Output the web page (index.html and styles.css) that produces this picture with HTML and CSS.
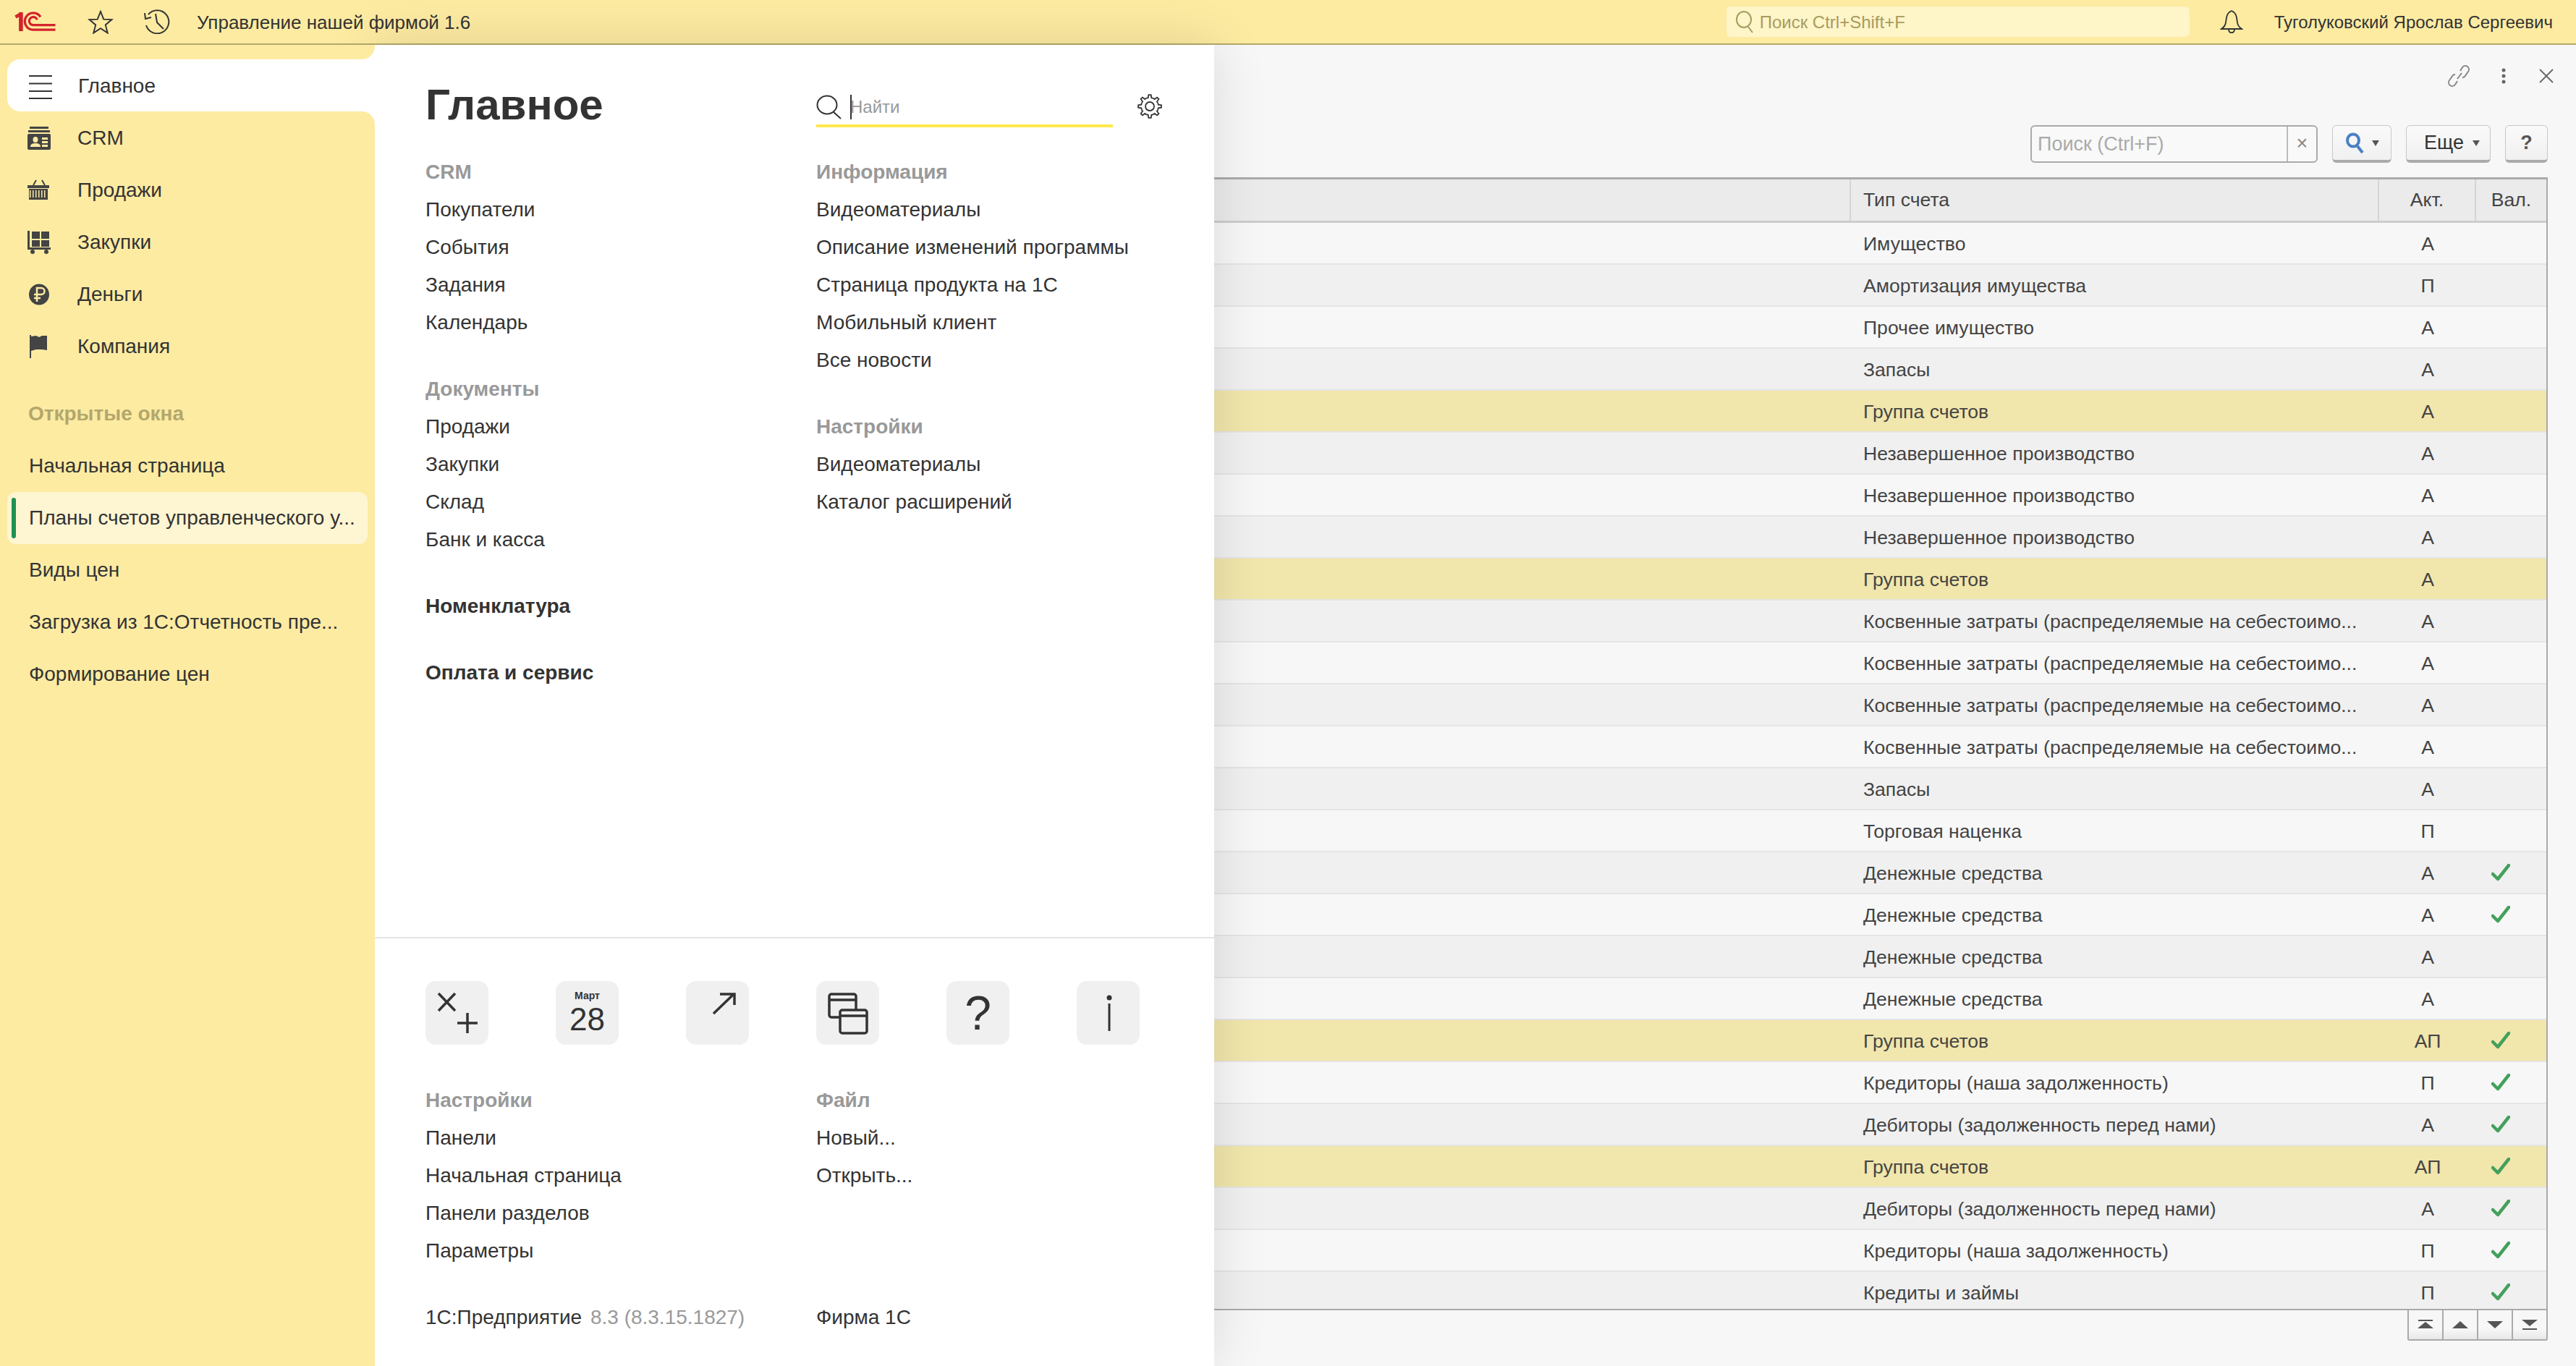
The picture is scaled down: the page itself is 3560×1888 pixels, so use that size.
FILE: index.html
```html
<!DOCTYPE html>
<html lang="ru">
<head>
  <meta charset="UTF-8">
  <title>Управление нашей фирмой 1.6</title>
  <link rel="stylesheet" href="styles.css">
</head>
<body>

  <header class="topbar">
    <svg class="logo" viewBox="0 0 60 30" fill="none" stroke="#d3232b">
      <path d="M1 8 L8 4" stroke-width="5"/>
      <path d="M9 1 V29" stroke-width="6"/>
      <path d="M38 8 A12.5 12.5 0 1 0 27 27 H60" stroke-width="3.5"/>
      <path d="M33 12 A6 6 0 1 0 27 20 H60" stroke-width="3.5"/>
    </svg>
    <svg class="top-star" viewBox="0 0 36 34" fill="none" stroke="#333" stroke-width="2">
      <path d="M18 2 L22.4 13 L34 13.5 L25 21 L28 32.5 L18 26 L8 32.5 L11 21 L2 13.5 L13.6 13 Z"/>
    </svg>
    <svg class="top-history" viewBox="0 0 36 34" fill="none" stroke="#333" stroke-width="2">
      <path d="M6 7 A16 16 0 1 1 3 22"/>
      <path d="M1 5 L2 13 L10 11"/>
      <path d="M16 6 L18 18 L27 27"/>
    </svg>
    <span class="top-title">Управление нашей фирмой 1.6</span>
    <div class="top-search">
      <svg class="top-search-icon" viewBox="0 0 26 32" fill="none" stroke="#a89c5e" stroke-width="2">
        <ellipse cx="12" cy="13" rx="10" ry="11"/>
        <path d="M18 23 L24 31"/>
      </svg>
      <span class="top-search-text">Поиск Ctrl+Shift+F</span>
    </div>
    <svg class="top-bell" viewBox="0 0 32 32" fill="none" stroke="#333" stroke-width="1.8">
      <path d="M16 1 C9 4 9 10 8 17 C7.5 21 5 24 2 26 H30 C27 24 24.500 21 24 17 C23 10 23 4 16 1 Z"/>
      <path d="M12 26 C12 33 20 33 20 26"/>
    </svg>
    <span class="top-user">Туголуковский Ярослав Сергеевич</span>
  </header>

  <div class="main">
    <nav class="sidebar">
      <div class="side-cap"></div>
      <div class="side-active-wrap">
        <div class="side-item side-active">
          <svg class="side-icon" viewBox="0 0 32 32" stroke="#333" stroke-width="2">
            <path d="M0 2 H32 M0 12.500 H32 M0 23 H32 M0 33 H32"/>
          </svg>
          <span>Главное</span>
        </div>
      </div>
      <div class="side-rest">
        <div class="side-item">
          <svg class="side-icon" viewBox="0 0 32 32" fill="#444">
            <rect x="3" y="0" width="26" height="3"/>
            <rect x="1" y="5" width="30" height="3"/>
            <path fill-rule="evenodd" d="M2 10 H30 A2 2 0 0 1 32 12 V30 A2 2 0 0 1 30 32 H2 A2 2 0 0 1 0 30 V12 A2 2 0 0 1 2 10 Z M11 14 A3.500 4 0 0 0 11 22 A3.500 4 0 0 0 11 14 Z M4 28 H18 C18 24 15 23 11 23 C7 23 4 24 4 28 Z M20 15 V18 H28 V15 Z M20 20 V23 H28 V20 Z M20 25 V28 H28 V25 Z"/>
          </svg>
          <span>CRM</span>
        </div>
        <div class="side-item">
          <svg class="side-icon" viewBox="0 0 32 32" fill="#444">
            <path d="M8 9 L12 2 M24 9 L20 2" stroke="#444" stroke-width="2" fill="none"/>
            <rect x="0" y="9" width="30" height="4"/>
            <rect x="2" y="14" width="26" height="15"/>
            <path d="M3 21 H27" stroke="#fdeba2" stroke-width="10" stroke-dasharray="1.500 2.500"/>
          </svg>
          <span>Продажи</span>
        </div>
        <div class="side-item">
          <svg class="side-icon" viewBox="0 0 32 32" fill="#444">
            <rect x="0" y="0" width="3" height="26"/>
            <rect x="6" y="1" width="11" height="10"/>
            <rect x="19" y="1" width="11" height="10"/>
            <rect x="6" y="13" width="11" height="9"/>
            <rect x="19" y="13" width="11" height="9"/>
            <rect x="0" y="23" width="32" height="3"/>
            <circle cx="7" cy="29" r="3"/>
            <circle cx="26" cy="29" r="3"/>
          </svg>
          <span>Закупки</span>
        </div>
        <div class="side-item">
          <svg class="side-icon" viewBox="0 0 32 32">
            <ellipse cx="16" cy="16" rx="14" ry="14.500" fill="#444"/>
            <path d="M13 26 V7 H19 A4.500 4.500 0 0 1 19 16 H9 M9 21 H18" fill="none" stroke="#fdeba2" stroke-width="2.500"/>
          </svg>
          <span>Деньги</span>
        </div>
        <div class="side-item">
          <svg class="side-icon" viewBox="0 0 32 32" fill="#444">
            <rect x="3" y="0" width="2" height="32"/>
            <path d="M5 2 L12 1 L16 3 L20 1 L27 1 V21 L20 20 L12 20 L5 22 Z"/>
          </svg>
          <span>Компания</span>
        </div>

        <div class="side-heading">Открытые окна</div>
        <div class="win-item">Начальная страница</div>
        <div class="win-item win-active"><i class="win-bar"></i>Планы счетов управленческого у...</div>
        <div class="win-item">Виды цен</div>
        <div class="win-item">Загрузка из 1С:Отчетность пре...</div>
        <div class="win-item">Формирование цен</div>
      </div>
    </nav>

    <section class="menu-panel">
      <div class="menu-top">
        <div class="menu-col">
          <h1 class="menu-title">Главное</h1>
          <div class="menu-group">
            <div class="menu-head">CRM</div>
            <div class="menu-link">Покупатели</div>
            <div class="menu-link">События</div>
            <div class="menu-link">Задания</div>
            <div class="menu-link">Календарь</div>
          </div>
          <div class="menu-group">
            <div class="menu-head">Документы</div>
            <div class="menu-link">Продажи</div>
            <div class="menu-link">Закупки</div>
            <div class="menu-link">Склад</div>
            <div class="menu-link">Банк и касса</div>
          </div>
          <div class="menu-group"><div class="menu-link menu-strong">Номенклатура</div></div>
          <div class="menu-group"><div class="menu-link menu-strong">Оплата и сервис</div></div>
        </div>
        <div class="menu-col">
          <div class="menu-tools">
            <div class="menu-search">
              <svg class="menu-search-icon" viewBox="0 0 36 34" fill="none" stroke="#333" stroke-width="2">
                <ellipse cx="15" cy="14" rx="13.500" ry="12.500"/>
                <path d="M24 24 L34 33"/>
              </svg>
              <i class="caret"></i>
              <span>Найти</span>
            </div>
            <svg class="menu-gear" viewBox="0 0 34 34" fill="none" stroke="#333" stroke-width="1.800">
              <defs>
                <path id="tooth" d="M12.41 5.91 A12 12 0 0 1 14.71 5.22 L15.33 1.09 H18.67 L19.29 5.22 A12 12 0 0 1 21.59 5.91"/>
              </defs>
              <use href="#tooth"/>
              <use href="#tooth" transform="rotate(45 17 17)"/>
              <use href="#tooth" transform="rotate(90 17 17)"/>
              <use href="#tooth" transform="rotate(135 17 17)"/>
              <use href="#tooth" transform="rotate(180 17 17)"/>
              <use href="#tooth" transform="rotate(225 17 17)"/>
              <use href="#tooth" transform="rotate(270 17 17)"/>
              <use href="#tooth" transform="rotate(315 17 17)"/>
              <circle cx="17" cy="17" r="6"/>
            </svg>
          </div>
          <div class="menu-group">
            <div class="menu-head">Информация</div>
            <div class="menu-link">Видеоматериалы</div>
            <div class="menu-link">Описание изменений программы</div>
            <div class="menu-link">Страница продукта на 1С</div>
            <div class="menu-link">Мобильный клиент</div>
            <div class="menu-link">Все новости</div>
          </div>
          <div class="menu-group">
            <div class="menu-head">Настройки</div>
            <div class="menu-link">Видеоматериалы</div>
            <div class="menu-link">Каталог расширений</div>
          </div>
        </div>
      </div>

      <div class="menu-bottom">
        <div class="tiles">
          <div class="tile">
            <svg viewBox="0 0 87 88" fill="none" stroke="#333" stroke-width="3.500">
              <path d="M18 17 L41 41 M41 17 L18 41"/>
              <path d="M44 58 H72 M58 44 V72"/>
            </svg>
          </div>
          <div class="tile tile-date">
            <span class="tile-month">Март</span>
            <span class="tile-day">28</span>
          </div>
          <div class="tile">
            <svg viewBox="0 0 87 88" fill="none" stroke="#333" stroke-width="3.500">
              <path d="M38 45 L66 18"/>
              <path d="M47 18 H67 V33"/>
            </svg>
          </div>
          <div class="tile">
            <svg viewBox="0 0 87 88" stroke="#333" stroke-width="3.500" fill="#f0f0f0">
              <rect x="18" y="18" width="37" height="32" rx="3"/>
              <path d="M18 26 H55"/>
              <rect x="33" y="40" width="37" height="32" rx="3"/>
              <path d="M33 48 H70"/>
            </svg>
          </div>
          <div class="tile tile-question">?</div>
          <div class="tile">
            <svg viewBox="0 0 87 88" fill="#333">
              <circle cx="45" cy="23" r="3.500"/>
              <rect x="43.500" y="31" width="3" height="38"/>
            </svg>
          </div>
        </div>
        <div class="menu-cols">
          <div class="menu-col">
            <div class="menu-group">
              <div class="menu-head">Настройки</div>
              <div class="menu-link">Панели</div>
              <div class="menu-link">Начальная страница</div>
              <div class="menu-link">Панели разделов</div>
              <div class="menu-link">Параметры</div>
            </div>
            <div class="menu-link">1С:Предприятие <span class="menu-version">8.3 (8.3.15.1827)</span></div>
          </div>
          <div class="menu-col">
            <div class="menu-group menu-group-file">
              <div class="menu-head">Файл</div>
              <div class="menu-link">Новый...</div>
              <div class="menu-link">Открыть...</div>
            </div>
            <div class="menu-link">Фирма 1С</div>
          </div>
        </div>
      </div>
    </section>

    <section class="content">
      <div class="win-tools">
        <svg class="tool-link" viewBox="0 0 30 30" fill="none" stroke="#888" stroke-width="2">
          <path d="M13 19 L19 11"/>
          <path d="M17 8 L20 3 A5 5 0 0 1 28 9 L23 16 A4 4 0 0 1 20 17"/>
          <path d="M13 22 L10 27 A5 5 0 0 1 2 21 L7 14 A4 4 0 0 1 10 13"/>
        </svg>
        <svg class="tool-dots" viewBox="0 0 6 22" fill="#666">
          <circle cx="3" cy="3" r="2.500"/>
          <circle cx="3" cy="11" r="2.500"/>
          <circle cx="3" cy="19" r="2.500"/>
        </svg>
        <svg class="tool-close" viewBox="0 0 20 20" stroke="#666" stroke-width="1.800">
          <path d="M1 1 L19 19 M19 1 L1 19"/>
        </svg>
      </div>

      <div class="toolbar">
        <div class="find-box">
          <span class="find-text">Поиск (Ctrl+F)</span>
          <span class="find-clear">×</span>
        </div>
        <div class="btn btn-find">
          <svg viewBox="0 0 26 30" fill="none" stroke="#4a80c4" stroke-width="4">
            <ellipse cx="11" cy="11" rx="8" ry="8.500"/>
            <path d="M17 19 L24 28"/>
          </svg>
          <i class="btn-arrow"></i>
        </div>
        <div class="btn btn-more">Еще<i class="btn-arrow"></i></div>
        <div class="btn btn-help">?</div>
      </div>

      <div class="grid">
        <div class="row head">
          <div class="cell"></div>
          <div class="cell cell-text">Тип счета</div>
          <div class="cell cell-mid">Акт.</div>
          <div class="cell cell-mid">Вал.</div>
        </div>
        <div class="row"><div class="cell"></div><div class="cell cell-text">Имущество</div><div class="cell cell-mid">А</div><div class="cell"></div></div>
        <div class="row"><div class="cell"></div><div class="cell cell-text">Амортизация имущества</div><div class="cell cell-mid">П</div><div class="cell"></div></div>
        <div class="row"><div class="cell"></div><div class="cell cell-text">Прочее имущество</div><div class="cell cell-mid">А</div><div class="cell"></div></div>
        <div class="row"><div class="cell"></div><div class="cell cell-text">Запасы</div><div class="cell cell-mid">А</div><div class="cell"></div></div>
        <div class="row group"><div class="cell"></div><div class="cell cell-text">Группа счетов</div><div class="cell cell-mid">А</div><div class="cell"></div></div>
        <div class="row"><div class="cell"></div><div class="cell cell-text">Незавершенное производство</div><div class="cell cell-mid">А</div><div class="cell"></div></div>
        <div class="row"><div class="cell"></div><div class="cell cell-text">Незавершенное производство</div><div class="cell cell-mid">А</div><div class="cell"></div></div>
        <div class="row"><div class="cell"></div><div class="cell cell-text">Незавершенное производство</div><div class="cell cell-mid">А</div><div class="cell"></div></div>
        <div class="row group"><div class="cell"></div><div class="cell cell-text">Группа счетов</div><div class="cell cell-mid">А</div><div class="cell"></div></div>
        <div class="row"><div class="cell"></div><div class="cell cell-text">Косвенные затраты (распределяемые на себестоимо...</div><div class="cell cell-mid">А</div><div class="cell"></div></div>
        <div class="row"><div class="cell"></div><div class="cell cell-text">Косвенные затраты (распределяемые на себестоимо...</div><div class="cell cell-mid">А</div><div class="cell"></div></div>
        <div class="row"><div class="cell"></div><div class="cell cell-text">Косвенные затраты (распределяемые на себестоимо...</div><div class="cell cell-mid">А</div><div class="cell"></div></div>
        <div class="row"><div class="cell"></div><div class="cell cell-text">Косвенные затраты (распределяемые на себестоимо...</div><div class="cell cell-mid">А</div><div class="cell"></div></div>
        <div class="row"><div class="cell"></div><div class="cell cell-text">Запасы</div><div class="cell cell-mid">А</div><div class="cell"></div></div>
        <div class="row"><div class="cell"></div><div class="cell cell-text">Торговая наценка</div><div class="cell cell-mid">П</div><div class="cell"></div></div>
        <div class="row"><div class="cell"></div><div class="cell cell-text">Денежные средства</div><div class="cell cell-mid">А</div><div class="cell cell-check"><svg viewBox="0 0 26 24" fill="none" stroke="#43a05c" stroke-width="4.500" stroke-linecap="round" stroke-linejoin="round"><path d="M2 14 L9 21 L24 2"/></svg></div></div>
        <div class="row"><div class="cell"></div><div class="cell cell-text">Денежные средства</div><div class="cell cell-mid">А</div><div class="cell cell-check"><svg viewBox="0 0 26 24" fill="none" stroke="#43a05c" stroke-width="4.500" stroke-linecap="round" stroke-linejoin="round"><path d="M2 14 L9 21 L24 2"/></svg></div></div>
        <div class="row"><div class="cell"></div><div class="cell cell-text">Денежные средства</div><div class="cell cell-mid">А</div><div class="cell"></div></div>
        <div class="row"><div class="cell"></div><div class="cell cell-text">Денежные средства</div><div class="cell cell-mid">А</div><div class="cell"></div></div>
        <div class="row group"><div class="cell"></div><div class="cell cell-text">Группа счетов</div><div class="cell cell-mid">АП</div><div class="cell cell-check"><svg viewBox="0 0 26 24" fill="none" stroke="#43a05c" stroke-width="4.500" stroke-linecap="round" stroke-linejoin="round"><path d="M2 14 L9 21 L24 2"/></svg></div></div>
        <div class="row"><div class="cell"></div><div class="cell cell-text">Кредиторы (наша задолженность)</div><div class="cell cell-mid">П</div><div class="cell cell-check"><svg viewBox="0 0 26 24" fill="none" stroke="#43a05c" stroke-width="4.500" stroke-linecap="round" stroke-linejoin="round"><path d="M2 14 L9 21 L24 2"/></svg></div></div>
        <div class="row"><div class="cell"></div><div class="cell cell-text">Дебиторы (задолженность перед нами)</div><div class="cell cell-mid">А</div><div class="cell cell-check"><svg viewBox="0 0 26 24" fill="none" stroke="#43a05c" stroke-width="4.500" stroke-linecap="round" stroke-linejoin="round"><path d="M2 14 L9 21 L24 2"/></svg></div></div>
        <div class="row group"><div class="cell"></div><div class="cell cell-text">Группа счетов</div><div class="cell cell-mid">АП</div><div class="cell cell-check"><svg viewBox="0 0 26 24" fill="none" stroke="#43a05c" stroke-width="4.500" stroke-linecap="round" stroke-linejoin="round"><path d="M2 14 L9 21 L24 2"/></svg></div></div>
        <div class="row"><div class="cell"></div><div class="cell cell-text">Дебиторы (задолженность перед нами)</div><div class="cell cell-mid">А</div><div class="cell cell-check"><svg viewBox="0 0 26 24" fill="none" stroke="#43a05c" stroke-width="4.500" stroke-linecap="round" stroke-linejoin="round"><path d="M2 14 L9 21 L24 2"/></svg></div></div>
        <div class="row"><div class="cell"></div><div class="cell cell-text">Кредиторы (наша задолженность)</div><div class="cell cell-mid">П</div><div class="cell cell-check"><svg viewBox="0 0 26 24" fill="none" stroke="#43a05c" stroke-width="4.500" stroke-linecap="round" stroke-linejoin="round"><path d="M2 14 L9 21 L24 2"/></svg></div></div>
        <div class="row"><div class="cell"></div><div class="cell cell-text">Кредиты и займы</div><div class="cell cell-mid">П</div><div class="cell cell-check"><svg viewBox="0 0 26 24" fill="none" stroke="#43a05c" stroke-width="4.500" stroke-linecap="round" stroke-linejoin="round"><path d="M2 14 L9 21 L24 2"/></svg></div></div>
      </div>

      <div class="pager">
        <div class="pager-btn"><svg viewBox="0 0 22 14" fill="#555"><path d="M1 0 H21 V2 H1 Z M11 3 L22 12 H0 Z"/></svg></div>
        <div class="pager-btn"><svg viewBox="0 0 22 14" fill="#555"><path d="M11 2 L22 12 H0 Z"/></svg></div>
        <div class="pager-btn"><svg viewBox="0 0 22 14" fill="#555"><path d="M0 2 H22 L11 12 Z"/></svg></div>
        <div class="pager-btn"><svg viewBox="0 0 22 14" fill="#555"><path d="M0 0 H22 L11 9 Z M1 12 H21 V14 H1 Z"/></svg></div>
      </div>
    </section>
  </div>

</body>
</html>
```

FILE: styles.css
```css
* {
  box-sizing: border-box;
}
html, body {
  height: 100%;
}
body {
  margin: 0;
  display: flex;
  flex-direction: column;
  overflow: hidden;
  background-color: #f7f7f7;
  color: #333;
  font-family: "Liberation Sans", Arial, sans-serif;
  font-size: 28px;
}

/* top bar */
.topbar {
  display: flex;
  align-items: center;
  flex: 0 0 62px;
  padding-left: 19px;
  background-color: #fdeba2;
  border-bottom: 2px solid #b5a86c;
  font-size: 26px;
}
.logo {
  width: 59px;
  height: 28px;
}
.top-star {
  width: 36px;
  height: 33px;
  margin-left: 43px;
}
.top-history {
  width: 36px;
  height: 34px;
  margin-left: 42px;
}
.top-title {
  margin-left: 37px;
  padding-top: 2px;
}
.top-search {
  display: flex;
  align-items: center;
  width: 640px;
  height: 42px;
  margin-left: auto;
  padding-left: 12px;
  background-color: #fef5c9;
  border-radius: 6px;
  color: #a89c5e;
  font-size: 24px;
}
.top-search-icon {
  width: 26px;
  height: 32px;
  margin-right: 8px;
}
.top-search-text {
  padding-top: 2px;
}
.top-bell {
  width: 32px;
  height: 32px;
  margin-left: 42px;
}
.top-user {
  margin-left: 43px;
  margin-right: 32px;
  padding-top: 2px;
  font-size: 24px;
}

.main {
  display: flex;
  flex: 1;
  min-height: 0;
}

/* left sidebar */
.sidebar {
  position: relative;
  z-index: 2;
  display: flex;
  flex-direction: column;
  flex: 0 0 518px;
  background-color: #fff;
}
.side-cap {
  flex: 0 0 20px;
  background-color: #fdeba2;
  border-bottom-right-radius: 18px;
}
.side-active-wrap {
  flex: 0 0 72px;
  padding-left: 10px;
  background-color: #fdeba2;
}
.side-item {
  display: flex;
  align-items: center;
  height: 72px;
  padding: 2px 0 0 38px;
}
.side-active {
  padding-left: 30px;
  background-color: #fff;
  border-radius: 18px 0 0 18px;
}
.side-icon {
  flex: none;
  width: 32px;
  height: 32px;
  margin-right: 37px;
  overflow: visible;
}
.side-active .side-icon {
  margin-right: 36px;
}
.side-rest {
  flex: 1;
  background-color: #fdeba2;
  border-top-right-radius: 18px;
}
.side-heading {
  height: 72px;
  margin-top: 22px;
  padding-left: 39px;
  color: #b3a76c;
  font-weight: bold;
  line-height: 72px;
}
.win-item {
  display: flex;
  align-items: center;
  height: 72px;
  margin-right: 10px;
  padding-left: 40px;
  white-space: nowrap;
}
.win-active {
  margin-left: 10px;
  padding-left: 6px;
  background-color: #fef5d2;
  border-radius: 12px;
}
.win-bar {
  flex: none;
  width: 6px;
  height: 56px;
  margin-right: 18px;
  background-color: #1f9150;
  border-radius: 3px;
}

/* menu panel */
.menu-panel {
  position: relative;
  z-index: 1;
  display: flex;
  flex-direction: column;
  flex: 0 0 1160px;
  background-color: #fff;
  box-shadow: 0 0 70px rgba(0, 0, 0, .12);
}
.menu-top {
  display: grid;
  grid-template-columns: 540px 1fr;
  flex: 1;
  padding-left: 70px;
}
.menu-title {
  height: 150px;
  margin: 0;
  padding-top: 48px;
  font-size: 60px;
  line-height: 70px;
}
.menu-group {
  margin-bottom: 40px;
}
.menu-head {
  color: #999;
  font-weight: bold;
  line-height: 52px;
}
.menu-link {
  line-height: 52px;
  white-space: nowrap;
}
.menu-strong {
  font-weight: bold;
}
.menu-version {
  margin-left: 4px;
  color: #999;
}
.menu-tools {
  display: flex;
  align-items: flex-start;
  height: 150px;
  padding-top: 62px;
}
.menu-search {
  display: flex;
  align-items: center;
  width: 410px;
  height: 52px;
  border-bottom: 4px solid #ffe84d;
  color: #999;
  font-size: 24px;
}
.menu-search-icon {
  width: 36px;
  height: 34px;
}
.caret {
  width: 2px;
  height: 34px;
  margin: 0 -2px 0 11px;
  background-color: #333;
}
.menu-gear {
  width: 34px;
  height: 34px;
  margin: 6px 0 0 34px;
}
.menu-bottom {
  flex: 0 0 593px;
  padding: 59px 0 0 70px;
  border-top: 2px solid #e4e4e4;
}
.tiles {
  display: flex;
  gap: 93px;
  margin-bottom: 51px;
}
.tile {
  display: flex;
  flex-direction: column;
  align-items: center;
  justify-content: center;
  flex: 0 0 87px;
  height: 88px;
  background-color: #f0f0f0;
  border-radius: 14px;
}
.tile svg {
  display: block;
  width: 87px;
  height: 88px;
}
.tile-month {
  font-size: 14px;
  font-weight: bold;
  line-height: 16px;
}
.tile-day {
  padding-top: 2px;
  font-size: 44px;
  line-height: 46px;
}
.tile-question {
  font-size: 66px;
  line-height: 88px;
}
.menu-cols {
  display: grid;
  grid-template-columns: 540px 1fr;
}
.menu-group-file {
  height: 260px;
}

/* form on the right */
.content {
  flex: 1;
  min-width: 0;
  padding: 28px 39px 0 0;
}
.win-tools {
  display: flex;
  align-items: center;
  justify-content: flex-end;
  height: 30px;
  margin-right: -8px;
}
.tool-link {
  width: 30px;
  height: 30px;
}
.tool-dots {
  width: 6px;
  height: 22px;
  margin-left: 44px;
}
.tool-close {
  width: 20px;
  height: 20px;
  margin-left: 46px;
}
.toolbar {
  display: flex;
  justify-content: flex-end;
  gap: 20px;
  height: 52px;
  margin-top: 53px;
  font-size: 27px;
}
.find-box {
  display: flex;
  width: 397px;
  background-color: #f9f9f9;
  border: 2px solid #aaa;
  border-radius: 6px;
}
.find-text {
  flex: 1;
  padding-left: 8px;
  color: #aaa;
  line-height: 48px;
}
.find-clear {
  width: 41px;
  border-left: 2px solid #bbb;
  color: #888;
  text-align: center;
  line-height: 46px;
}
.btn {
  display: flex;
  align-items: center;
  justify-content: center;
  background: linear-gradient(#fafafa, #f0f0f0);
  border: 1px solid #c8c8c8;
  border-bottom: 4px solid #aaa;
  border-radius: 6px;
}
.btn-find {
  width: 82px;
  gap: 11px;
}
.btn-find svg {
  width: 26px;
  height: 30px;
}
.btn-more {
  width: 117px;
  padding-left: 10px;
}
.btn-help {
  width: 59px;
  color: #555;
  font-weight: bold;
}
.btn-arrow {
  flex: none;
  width: 0;
  height: 0;
  border-top: 8px solid #555;
  border-left: 5px solid transparent;
  border-right: 5px solid transparent;
}
.btn-more .btn-arrow {
  margin-left: 12px;
}
.grid {
  height: 1566px;
  margin-top: 20px;
  overflow: hidden;
  border-top: 3px solid #aaa;
  border-right: 2px solid #aaa;
  border-bottom: 2px solid #aaa;
  font-size: 26.600px;
}
.row {
  display: grid;
  grid-template-columns: 1fr 730px 134px 97px;
  align-items: center;
  height: 58px;
  background-color: #f7f7f7;
  border-bottom: 2px solid #e5e5e5;
  color: #444;
}
.row:nth-child(odd) {
  background-color: #f0f0f0;
}
.row.group {
  background-color: #f1e6ab;
}
.row.head {
  height: 60px;
  background-color: #ebebeb;
  border-bottom: 3px solid #ccc;
}
.head .cell {
  display: flex;
  align-items: center;
  justify-content: center;
  height: 57px;
  padding-top: 0;
  border-right: 2px solid #d4d4d4;
}
.head .cell:last-child {
  border-right: none;
}
.head .cell-text {
  justify-content: flex-start;
  padding-left: 17px;
}
.cell-text {
  padding: 3px 0 0 17px;
  white-space: nowrap;
}
.cell-mid {
  padding-top: 3px;
  text-align: center;
}
.cell-check {
  display: flex;
  padding-left: 21px;
}
.cell-check svg {
  width: 26px;
  height: 24px;
}
.pager {
  display: flex;
  width: 194px;
  height: 42px;
  margin-left: auto;
  border-left: 2px solid #aaa;
  border-right: 2px solid #aaa;
  border-bottom: 2px solid #aaa;
  border-radius: 0 0 3px 3px;
}
.pager-btn {
  display: flex;
  align-items: center;
  justify-content: center;
  flex: 1;
  background: linear-gradient(#f7f7f7 65%, #e8e8e8);
  border-left: 2px solid #aaa;
}
.pager-btn:first-child {
  border-left: none;
}
.pager-btn svg {
  width: 22px;
  height: 14px;
}
```
